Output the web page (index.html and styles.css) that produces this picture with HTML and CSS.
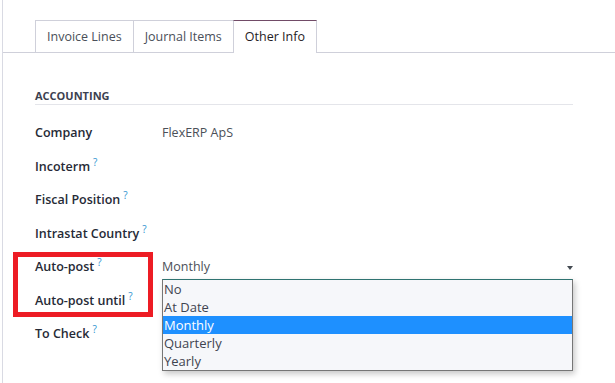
FILE: index.html
```html
<!DOCTYPE html>
<html lang="en">
<head>
  <meta charset="UTF-8" />
  <meta name="viewport" content="width=device-width, initial-scale=1.0"/>
  <title>Invoice - Other Info</title>
  <link rel="stylesheet" href="styles.css">
</head>
<body>

<div class="sheet">
  <!-- NOTEBOOK TABS -->
  <div class="tabs">
    <a href="#" class="tab">Invoice Lines</a>
    <a href="#" class="tab">Journal Items</a>
    <a href="#" class="tab active">Other Info</a>
  </div>

  <!-- OTHER INFO PAGE -->
  <div class="page">
    <div class="group-title">Accounting</div>

    <div class="field">
      <label>Company</label>
      <span class="value">FlexERP ApS</span>
    </div>
    <div class="field">
      <label>Incoterm<sup>?</sup></label>
    </div>
    <div class="field">
      <label>Fiscal Position<sup>?</sup></label>
    </div>
    <div class="field">
      <label>Intrastat Country<sup>?</sup></label>
    </div>
    <div class="field">
      <label>Auto-post<sup>?</sup></label>
      <div class="select">
        <span>Monthly</span>
        <span class="caret"></span>
        <ul class="options">
          <li>No</li>
          <li>At Date</li>
          <li class="selected">Monthly</li>
          <li>Quarterly</li>
          <li>Yearly</li>
        </ul>
      </div>
    </div>
    <div class="field">
      <label>Auto-post until<sup>?</sup></label>
    </div>
    <div class="field">
      <label>To Check<sup>?</sup></label>
    </div>
  </div>

  <!-- annotation box -->
  <div class="highlight"></div>
</div>

</body>
</html>
```

FILE: styles.css
```css
body {
  margin: 0;
  font-family: "Open Sans", Arial, sans-serif;
  font-size: 12px;
  background: #ffffff;
  color: #262a36;
}
.sheet {
  position: relative;
  margin-left: 2px;
  min-height: 383px;
  border-left: 1px solid #d9dae3;
}

/* Tabs */
.tabs {
  display: flex;
  padding: 20px 0 0 32px;
  border-bottom: 1px solid #cfd0da;
}
.tab {
  display: block;
  height: 31px;
  line-height: 31px;
  padding: 0 11px;
  font-size: 12.5px;
  color: #4a4f59;
  text-decoration: none;
  border: 1px solid #cfd0da;
  border-bottom: none;
  margin-right: -1px;
}
.tab.active {
  color: #1f2125;
  border-top-color: #714b67;
  background: #ffffff;
  height: 32px;
  margin-bottom: -1px;
}

/* Page */
.page {
  width: 538px;
  padding-left: 32px;
}
.group-title {
  margin-top: 35px;
  line-height: 16px;
  font-size: 11px;
  font-weight: 700;
  text-transform: uppercase;
  color: #3c4150;
  border-bottom: 1px solid #e4e5ea;
  margin-bottom: 11px;
}
.field {
  display: flex;
  align-items: center;
  height: 33.5px;
  font-size: 12.5px;
}
.field label {
  width: 127px;
  flex-shrink: 0;
  font-weight: 600;
  color: #262a36;
}
.field sup {
  font-size: 10px;
  font-weight: 400;
  color: #2f94d0;
  margin-left: 3px;
  vertical-align: 5px;
  line-height: 0;
}
.value {
  color: #4b5058;
}

/* Select with opened list */
.select {
  position: relative;
  flex: 1;
  height: 33.5px;
  display: flex;
  align-items: center;
  color: #4b5058;
}
.caret {
  position: absolute;
  right: 0;
  top: 16px;
  border-left: 3.5px solid transparent;
  border-right: 3.5px solid transparent;
  border-top: 4px solid #444a52;
}
.options {
  position: absolute;
  top: 29px;
  left: 0;
  right: 0;
  margin: 0;
  padding: 0;
  list-style: none;
  background: #f6f7fa;
  border: 1px solid #767676;
  border-top-color: #2f7371;
  box-shadow: 2px 3px 6px rgba(0,0,0,0.22);
  color: #3f4450;
  font-size: 13px;
}
.options li {
  height: 18px;
  line-height: 18px;
  padding-left: 1px;
}
.options li.selected {
  background: #1e90ff;
  color: #ffffff;
}

.highlight {
  position: absolute;
  left: 10px;
  top: 252px;
  width: 140px;
  height: 65px;
  box-sizing: border-box;
  border: 5px solid #ed1c24;
}
```
